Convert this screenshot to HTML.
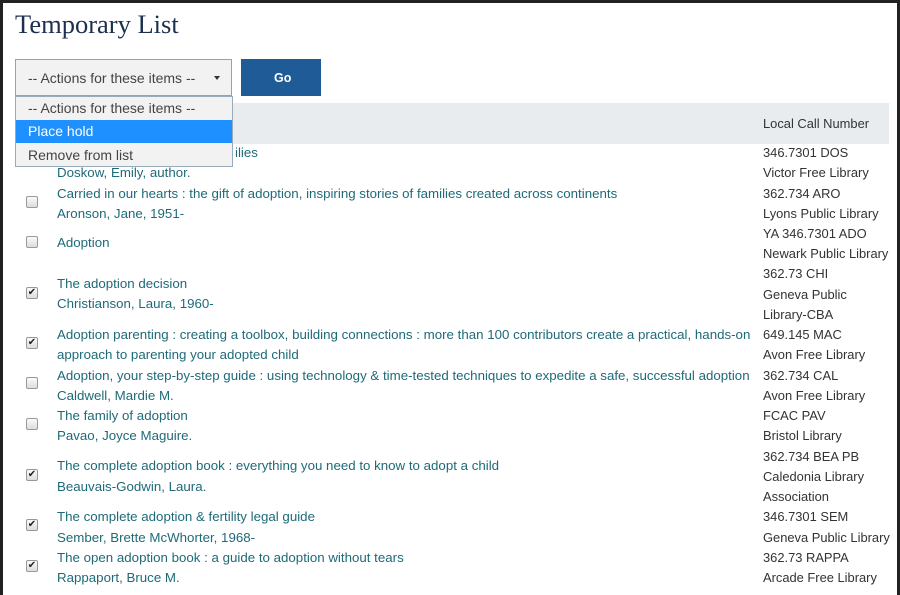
<!DOCTYPE html>
<html><head><style>
body{margin:0;width:900px;height:595px;overflow:hidden;background:#222;}
#f{position:absolute;left:3px;top:3px;width:894px;height:592px;background:#fff;overflow:hidden}
.t{position:absolute;font-family:"Liberation Sans",sans-serif;font-size:12.5px;white-space:nowrap;line-height:16px}
.l{color:#1e6a78;left:54px;font-size:13.3px}
.c{color:#333;left:760px;font-size:12.9px}
.cb{position:absolute;left:23px;width:10px;height:10px;border:1px solid #999;border-radius:2px;background:linear-gradient(#fafafa,#ddd);font-size:10px;line-height:10px;text-align:center;color:#222;font-family:"DejaVu Sans",sans-serif}
</style></head><body><div id="f">
<div style="position:absolute;left:12px;top:6px;font-family:'Liberation Serif',serif;font-size:26.5px;color:#1c2f4d">Temporary List</div>
<div style="position:absolute;left:12px;top:56px;width:215px;height:35px;border:1px solid #7fa7d6;background:#f2f2f2"></div>
<div class="t" style="left:25px;top:67px;color:#444;font-size:14px">-- Actions for these items --</div>
<div style="position:absolute;left:211px;top:73px;border:3.5px solid transparent;border-top:4px solid #333;border-bottom:0"></div>
<div style="position:absolute;left:238px;top:56px;width:80px;height:37px;background:#1f5b97"></div>
<div class="t" style="left:271px;top:67px;color:#fff;font-weight:bold">Go</div>
<div style="position:absolute;left:12px;top:100px;width:874px;height:41px;background:#e9ecef"></div>
<div class="t c" style="top:113px">Local Call Number</div>
<div style="position:absolute;left:12px;top:93px;width:216px;height:69px;border:1px solid #9ab;background:#f2f2f2"></div>
<div style="position:absolute;left:13px;top:117px;width:216px;height:23px;background:#1e90ff"></div>
<div class="t" style="left:25px;top:97px;color:#444;font-size:14px">-- Actions for these items --</div>
<div class="t" style="left:25px;top:120px;color:#fff;font-size:14px">Place hold</div>
<div class="t" style="left:25px;top:144px;color:#444;font-size:14px">Remove from list</div>
<div class="t l" style="left:232px;top:142px">ilies</div>
<div class="t l" style="top:162px">Doskow, Emily, author.</div>
<div class="t l" style="top:183px">Carried in our hearts : the gift of adoption, inspiring stories of families created across continents</div>
<div class="t l" style="top:203px">Aronson, Jane, 1951-</div>
<div class="t l" style="top:232px">Adoption</div>
<div class="t l" style="top:273px">The adoption decision</div>
<div class="t l" style="top:293px">Christianson, Laura, 1960-</div>
<div class="t l" style="top:324px">Adoption parenting : creating a toolbox, building connections : more than 100 contributors create a practical, hands-on</div>
<div class="t l" style="top:344px">approach to parenting your adopted child</div>
<div class="t l" style="top:365px">Adoption, your step-by-step guide : using technology &amp; time-tested techniques to expedite a safe, successful adoption</div>
<div class="t l" style="top:385px">Caldwell, Mardie M.</div>
<div class="t l" style="top:405px">The family of adoption</div>
<div class="t l" style="top:425px">Pavao, Joyce Maguire.</div>
<div class="t l" style="top:455px">The complete adoption book : everything you need to know to adopt a child</div>
<div class="t l" style="top:476px">Beauvais-Godwin, Laura.</div>
<div class="t l" style="top:506px">The complete adoption &amp; fertility legal guide</div>
<div class="t l" style="top:527px">Sember, Brette McWhorter, 1968-</div>
<div class="t l" style="top:547px">The open adoption book : a guide to adoption without tears</div>
<div class="t l" style="top:567px">Rappaport, Bruce M.</div>
<div class="t c" style="top:142px">346.7301 DOS</div>
<div class="t c" style="top:162px">Victor Free Library</div>
<div class="t c" style="top:183px">362.734 ARO</div>
<div class="t c" style="top:203px">Lyons Public Library</div>
<div class="t c" style="top:223px">YA 346.7301 ADO</div>
<div class="t c" style="top:243px">Newark Public Library</div>
<div class="t c" style="top:263px">362.73 CHI</div>
<div class="t c" style="top:284px">Geneva Public</div>
<div class="t c" style="top:304px">Library-CBA</div>
<div class="t c" style="top:324px">649.145 MAC</div>
<div class="t c" style="top:344px">Avon Free Library</div>
<div class="t c" style="top:365px">362.734 CAL</div>
<div class="t c" style="top:385px">Avon Free Library</div>
<div class="t c" style="top:405px">FCAC PAV</div>
<div class="t c" style="top:425px">Bristol Library</div>
<div class="t c" style="top:446px">362.734 BEA PB</div>
<div class="t c" style="top:466px">Caledonia Library</div>
<div class="t c" style="top:486px">Association</div>
<div class="t c" style="top:506px">346.7301 SEM</div>
<div class="t c" style="top:527px">Geneva Public Library</div>
<div class="t c" style="top:547px">362.73 RAPPA</div>
<div class="t c" style="top:567px">Arcade Free Library</div>
<div class="cb" style="top:193px"></div>
<div class="cb" style="top:233px"></div>
<div class="cb" style="top:284px">✔</div>
<div class="cb" style="top:334px">✔</div>
<div class="cb" style="top:374px"></div>
<div class="cb" style="top:415px"></div>
<div class="cb" style="top:466px">✔</div>
<div class="cb" style="top:516px">✔</div>
<div class="cb" style="top:557px">✔</div>
</div></body></html>
